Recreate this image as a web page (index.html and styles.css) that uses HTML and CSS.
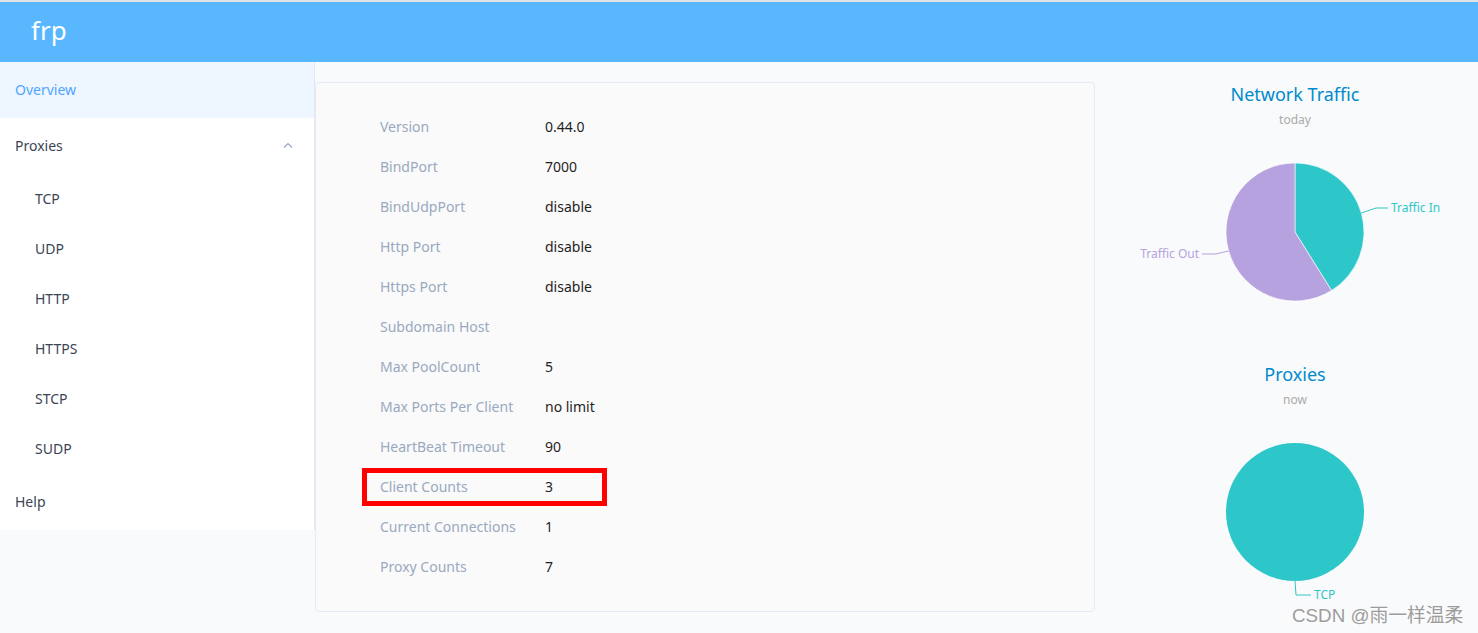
FILE: index.html
```html
<!DOCTYPE html>
<html>
<head>
  <title>frp</title>
  <link rel="stylesheet" href="styles.css">
</head>
<body>
  <div class="header">
    <span class="brand">frp</span>
  </div>
  <div class="layout">
    <ul class="menu">
      <li class="menu-item active">Overview</li>
      <li class="menu-item submenu-title">Proxies
        <svg class="arrow" width="10" height="6" viewBox="0 0 10 6"><path d="M1 5.5 L5 1.5 L9 5.5" fill="none" stroke="#97a8be" stroke-width="1.2"/></svg>
      </li>
      <li class="sub-item">TCP</li>
      <li class="sub-item">UDP</li>
      <li class="sub-item">HTTP</li>
      <li class="sub-item">HTTPS</li>
      <li class="sub-item">STCP</li>
      <li class="sub-item">SUDP</li>
      <li class="menu-item">Help</li>
    </ul>

    <div class="main">
      <div class="card">
        <div class="row"><span class="label">Version</span><span class="value">0.44.0</span></div>
        <div class="row"><span class="label">BindPort</span><span class="value">7000</span></div>
        <div class="row"><span class="label">BindUdpPort</span><span class="value">disable</span></div>
        <div class="row"><span class="label">Http Port</span><span class="value">disable</span></div>
        <div class="row"><span class="label">Https Port</span><span class="value">disable</span></div>
        <div class="row"><span class="label">Subdomain Host</span><span class="value"></span></div>
        <div class="row"><span class="label">Max PoolCount</span><span class="value">5</span></div>
        <div class="row"><span class="label">Max Ports Per Client</span><span class="value">no limit</span></div>
        <div class="row"><span class="label">HeartBeat Timeout</span><span class="value">90</span></div>
        <div class="row marked"><span class="label">Client Counts</span><span class="value">3</span></div>
        <div class="row"><span class="label">Current Connections</span><span class="value">1</span></div>
        <div class="row"><span class="label">Proxy Counts</span><span class="value">7</span></div>
      </div>

      <div class="charts">
        <div class="chart">
          <div class="chart-title">Network Traffic</div>
          <div class="chart-sub">today</div>
          <svg class="pie" width="370" height="232" viewBox="0 0 370 232">
            <path d="M185 104 L185 35 A69 69 0 0 1 221.56 162.52 Z" fill="#2ec7c9" stroke="#fff" stroke-width="0.6"/>
            <path d="M185 104 L221.56 162.52 A69 69 0 1 1 185 35 Z" fill="#b6a2de" stroke="#fff" stroke-width="0.6"/>
            <polyline points="251.3,85 266,80 278,80" fill="none" stroke="#2ec7c9" stroke-width="1"/>
            <text x="281" y="84" class="pie-label" fill="#2ec7c9">Traffic In</text>
            <polyline points="118.7,123 106,126 92,126" fill="none" stroke="#b6a2de" stroke-width="1"/>
            <text x="89" y="130" class="pie-label" fill="#b6a2de" text-anchor="end">Traffic Out</text>
          </svg>
        </div>
        <div class="chart">
          <div class="chart-title">Proxies</div>
          <div class="chart-sub">now</div>
          <svg class="pie" width="370" height="232" viewBox="0 0 370 232">
            <circle cx="185" cy="104" r="69" fill="#2ec7c9"/>
            <polyline points="185,173 186,187 201,187" fill="none" stroke="#2ec7c9" stroke-width="1"/>
            <text x="204" y="191" class="pie-label" fill="#2ec7c9">TCP</text>
          </svg>
        </div>
      </div>
    </div>
  </div>
  <div class="watermark">CSDN @雨一样温柔</div>
</body>
</html>
```

FILE: styles.css
```css
body {
  margin: 0;
  font-family: "Noto Sans", "Noto Sans CJK SC", sans-serif;
  font-size: 14px;
  background-color: #f9fafb;
  overflow: hidden;
}

.header {
  height: 60px;
  border-top: 2px solid #dfe3e8;
  background-color: #58b7ff;
  display: flex;
  align-items: center;
  padding-left: 31px;
}

.brand {
  color: #fff;
  font-size: 26px;
  line-height: 1;
  margin-top: -4px;
}

.layout {
  display: flex;
  align-items: flex-start;
}

.menu {
  list-style: none;
  margin: 0;
  padding: 0;
  width: 314px;
  flex-shrink: 0;
  background-color: #fff;
  border-right: 1px solid #e4e7ee;
}

.menu-item {
  height: 56px;
  line-height: 56px;
  padding-left: 15px;
  color: #3b4556;
  position: relative;
}

.menu-item.active {
  background-color: #eef6ff;
  color: #4ea5ff;
}

.arrow {
  position: absolute;
  right: 21px;
  top: 24px;
}

.sub-item {
  height: 50px;
  line-height: 50px;
  padding-left: 35px;
  color: #3b4556;
}

.main {
  display: flex;
  align-items: flex-start;
  flex: 1;
}

.card {
  width: 714px;
  margin-top: 20px;
  padding: 23px 0 25px 64px;
  background-color: #fafafa;
  border: 1px solid #e6eaf2;
  border-radius: 4px;
}

.row {
  height: 40px;
  display: flex;
  align-items: center;
  position: relative;
}

.label {
  width: 165px;
  color: #99a9bf;
}

.value {
  color: #1f1f1f;
}

.marked::after {
  content: "";
  position: absolute;
  left: -18px;
  top: 2px;
  width: 235px;
  height: 28px;
  border: 5px solid #ff0000;
}

.charts {
  width: 370px;
  margin-left: 15px;
  padding-top: 18px;
}

.chart {
  text-align: center;
}

.chart-title {
  font-size: 18px;
  line-height: 28px;
  color: #008acd;
}

.chart-sub {
  font-size: 12px;
  line-height: 16px;
  margin-top: 4px;
  color: #aaa;
}

.pie {
  display: block;
}

.pie-label {
  font-size: 12px;
  font-family: "Noto Sans", sans-serif;
}

.watermark {
  position: absolute;
  left: 1292px;
  top: 600px;
  font-size: 18.8px;
  color: #9c9c9c;
  text-shadow: 1px 1px 0 rgba(255, 255, 255, 0.7);
  font-family: "Liberation Sans", "Noto Sans CJK SC", sans-serif;
}
```
